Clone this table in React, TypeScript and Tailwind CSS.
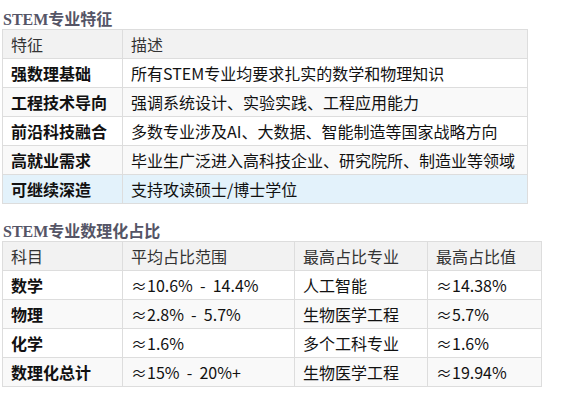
const FONT = '"Noto Sans CJK SC", "Noto Sans", sans-serif';

type Row = { cells: string[]; bg: string };

const features: Row[] = [
  { cells: ["强数理基础", "所有STEM专业均要求扎实的数学和物理知识"], bg: "bg-white" },
  { cells: ["工程技术导向", "强调系统设计、实验实践、工程应用能力"], bg: "bg-[#f9f9f9]" },
  { cells: ["前沿科技融合", "多数专业涉及AI、大数据、智能制造等国家战略方向"], bg: "bg-white" },
  { cells: ["高就业需求", "毕业生广泛进入高科技企业、研究院所、制造业等领域"], bg: "bg-[#f9f9f9]" },
  { cells: ["可继续深造", "支持攻读硕士/博士学位"], bg: "bg-[#e3f2fb]" },
];

const ratios: Row[] = [
  { cells: ["数学", "≈10.6%  -  14.4%", "人工智能", "≈14.38%"], bg: "bg-white" },
  { cells: ["物理", "≈2.8%  -  5.7%", "生物医学工程", "≈5.7%"], bg: "bg-[#f9f9f9]" },
  { cells: ["化学", "≈1.6%", "多个工科专业", "≈1.6%"], bg: "bg-white" },
  { cells: ["数理化总计", "≈15%  -  20%+", "生物医学工程", "≈19.94%"], bg: "bg-[#f9f9f9]" },
];

function Title({ children, top }: { children: string; top: string }) {
  return (
    <h3
      className={`${top} pl-[3px] font-['Liberation_Serif','Noto_Sans_CJK_SC',serif] text-[16px] leading-[19px] font-bold text-[#555566]`}
    >
      {children}
    </h3>
  );
}

function Table({ head, rows, widths, total }: { head: string[]; rows: Row[]; widths: string[]; total: string }) {
  const cell = "border border-[#dddddd] px-2 py-[5px] text-left align-middle leading-[18px] whitespace-pre";
  return (
    <table className={`${total} ml-[2px] border-collapse table-fixed text-[16px]`}>
      <colgroup>
        {widths.map((w, i) => (
          <col key={i} className={w} />
        ))}
      </colgroup>
      <thead>
        <tr className="bg-[#f2f2f2]">
          {head.map((h) => (
            <th key={h} className={`${cell} font-normal text-[#333333]`}>
              {h}
            </th>
          ))}
        </tr>
      </thead>
      <tbody>
        {rows.map((r, i) => (
          <tr key={i} className={r.bg}>
            {r.cells.map((c, j) => (
              <td key={j} className={`${cell} text-[#111111] ${j === 0 ? "font-bold" : ""}`}>
                {c}
              </td>
            ))}
          </tr>
        ))}
      </tbody>
    </table>
  );
}

export default function App() {
  return (
    <div className="min-h-[400px] w-[566px] bg-white" style={{ fontFamily: FONT }}>
      <Title top="pt-[10px]">STEM专业特征</Title>
      <Table
        head={["特征", "描述"]}
        rows={features}
        widths={["w-[120px]", "w-[405px]"]}
        total="w-[525px]"
      />
      <Title top="mt-[18px]">STEM专业数理化占比</Title>
      <Table
        head={["科目", "平均占比范围", "最高占比专业", "最高占比值"]}
        rows={ratios}
        widths={["w-[120px]", "w-[172px]", "w-[133px]", "w-[114px]"]}
        total="w-[539px]"
      />
    </div>
  );
}
